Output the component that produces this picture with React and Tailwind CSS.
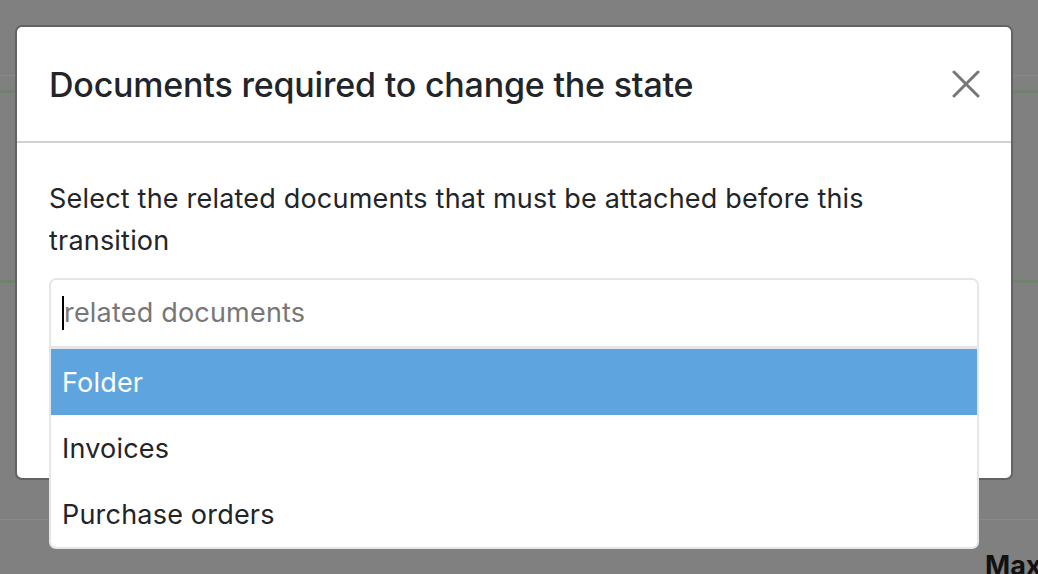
import React from 'react';

const options = ['Folder', 'Invoices', 'Purchase orders'];

function App() {
  return (
    <div className="relative h-[574px] w-[1038px] overflow-hidden bg-[#808080] font-['Inter',sans-serif] text-[#212529]">
      {/* page behind the backdrop */}
      <div className="flex flex-col">
        <div className="h-[76px] border-b border-[#8a8a8a]"></div>
        <div className="h-[14px]"></div>
        <div className="h-[3px] bg-[#72806f]"></div>
        <div className="h-[187px]"></div>
        <div className="h-[3px] bg-[#72806f]"></div>
        <div className="h-[237px] border-b border-[#8a8a8a]"></div>
        <div className="flex justify-end pt-[32px]">
          <span className="w-[53px] whitespace-nowrap text-[27px] font-bold leading-none text-[#111]">Max</span>
        </div>
      </div>

      {/* Modal */}
      <div className="absolute left-[15px] top-[25px] w-[998px] rounded-[7px] border-2 border-[#636363] bg-white">
        <div className="flex h-[116px] items-center justify-between border-b-2 border-[#ced3d8] pl-[32px] pr-[30px]">
          <h2 className="text-[34px] font-medium tracking-[-0.2px]">Documents required to change the state</h2>
          <button className="flex h-[30px] w-[30px] items-center justify-center text-[#777]">
            <svg width="28" height="28" viewBox="0 0 28 28" fill="none" stroke="currentColor" strokeWidth="3" strokeLinecap="round">
              <path d="M2 2 L26 26 M26 2 L2 26" />
            </svg>
          </button>
        </div>
        <div className="px-[32px] pb-[132px] pt-[35px]">
          <p className="max-w-[880px] text-[27px] leading-[42px] tracking-[0.2px]">Select the related documents that must be attached before this transition</p>
          <div className="relative mt-[16px]">
            <div className="flex h-[68px] items-center rounded-t-[7px] border-2 border-b-0 border-[#e6e6ea] pl-[11px]">
              <span className="h-[34px] w-[2px] bg-black"></span>
              <span className="text-[27px] tracking-[0.2px] text-[#777]">related documents</span>
            </div>
            {/* dropdown */}
            <div className="absolute left-0 right-0 top-[68px] z-10 overflow-hidden rounded-b-[7px] border-2 border-t-[3px] border-[#e6e6ea] bg-white">
              {options.map((o, i) => (
                <div
                  key={o}
                  className={
                    i === 0
                      ? 'flex h-[66px] items-center bg-[#5ea5df] pl-[11px] pt-[3px] text-[27px] tracking-[0.2px] text-white'
                      : 'flex h-[66px] items-center pl-[11px] pt-[3px] text-[27px] tracking-[0.2px] text-[#212529]'
                  }
                >
                  {o}
                </div>
              ))}
            </div>
          </div>
        </div>
      </div>
    </div>
  );
}

export default App;
